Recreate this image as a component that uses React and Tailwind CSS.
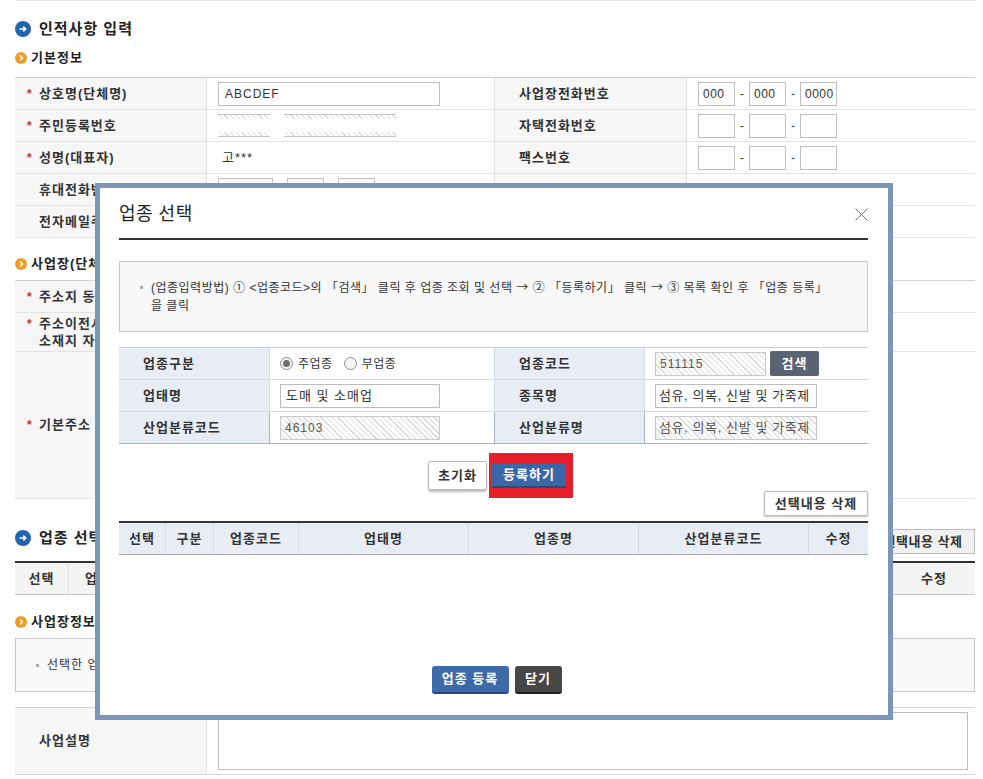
import React from 'react';

const hatch =
  'bg-[image:repeating-linear-gradient(45deg,#ffffff_0px,#ffffff_3px,#d9d9d9_3px,#d9d9d9_4px)]';

const BlueIcon = () => (
  <svg width="16" height="16" viewBox="0 0 16 16" className="shrink-0">
    <circle cx="8" cy="8" r="8" fill="#2165ad" />
    <path d="M4.6 8h6.2M8.3 5.6 10.8 8 8.3 10.4" stroke="#fff" strokeWidth="1.5" fill="none" />
  </svg>
);

const OrangeIcon = () => (
  <svg width="12" height="12" viewBox="0 0 12 12" className="shrink-0">
    <circle cx="6" cy="6" r="6" fill="#ee9d2a" />
    <path d="M5 3.6 7.4 6 5 8.4" stroke="#fff" strokeWidth="1.4" fill="none" />
  </svg>
);

const Star = () => <span className="w-[12px] shrink-0 text-[12px] text-[#c8312f]">*</span>;

const Arrow = () => <span className="font-['Noto_Sans_CJK_KR',sans-serif]">→</span>;

const Label = ({ star, children, h = 'h-[32px]' }) => (
  <div className={`${h} bg-[#f6f6f6] border-b border-r border-[#e3e3e3] flex items-center font-bold ${star ? 'pl-[12px]' : 'pl-[24px]'}`}>
    {star && <Star />}
    <span>{children}</span>
  </div>
);

const Cell = ({ children, h = 'h-[32px]', last }) => (
  <div className={`${h} border-b ${last ? '' : 'border-r'} border-[#e3e3e3] flex items-center pl-[11px]`}>{children}</div>
);

const Box = ({ w, children }) => (
  <div className={`${w} h-[24px] border border-[#bdbdbd] bg-white flex items-center px-[4px] text-[12px] tracking-[0.5px] overflow-hidden whitespace-nowrap`}>
    {children}
  </div>
);

const Dash = () => <span className="w-[14px] text-center text-[12px] tracking-normal">-</span>;

const Phone = ({ a = '', b = '', c = '' }) => (
  <div className="flex items-center">
    <Box w="w-[37px]">{a}</Box>
    <Dash />
    <Box w="w-[37px]">{b}</Box>
    <Dash />
    <Box w="w-[37px]">{c}</Box>
  </div>
);

// disabled masked field: hatched strips top and bottom
const Hatched = ({ w }) => (
  <div className={`${w} flex flex-col`}>
    <div className={`h-[5px] border-t border-[#c4c4c4] ${hatch}`} />
    <div className="h-[13px] bg-white" />
    <div className={`h-[5px] border-b border-[#c4c4c4] ${hatch}`} />
  </div>
);

const MLabel = ({ children }) => (
  <div className="h-[32px] bg-[#e8edf5] border-b border-r border-[#d6dce6] flex items-center pl-[24px] font-bold">{children}</div>
);

const MCell = ({ children, last }) => (
  <div className={`h-[32px] border-b ${last ? '' : 'border-r'} border-[#d6dce6] flex items-center pl-[10px]`}>{children}</div>
);

const Radio = ({ on, children }) => (
  <label className="flex items-center gap-[5px] text-[12px] tracking-[0.5px]">
    <span className="w-[13px] h-[13px] rounded-full border border-[#8d8d8d] bg-[#f5f5f5] flex items-center justify-center">
      {on && <span className="w-[7px] h-[7px] rounded-full bg-[#707070]" />}
    </span>
    {children}
  </label>
);

function Modal() {
  return (
    <div className="absolute left-[95px] top-[183px] w-[798px] h-[537px] border-[5px] border-[#7b96b9] bg-white pl-[19px] overflow-hidden">
      <div className="w-[749px]">
        <div className="h-[52px] pt-[3px] flex items-center justify-between border-b-2 border-[#333]">
          <span className="text-[18px] text-[#222] tracking-[0.5px]">업종 선택</span>
          <svg width="13" height="13" viewBox="0 0 13 13">
            <path d="M0.5 0.5 12.5 12.5M12.5 0.5 0.5 12.5" stroke="#777" strokeWidth="1" />
          </svg>
        </div>

        <div className="mt-[21px] h-[71px] border border-[#c9c9c9] bg-[#f7f7f7] flex items-center pl-[20px] text-[12px] leading-[18px] tracking-[0.5px]">
          <span className="self-start mt-[24px] w-[3px] h-[3px] bg-[#aaa] mr-[8px]" />
          <p>
            (업종입력방법) ① &lt;업종코드&gt;의 「검색」 클릭 후 업종 조회 및 선택 <Arrow /> ② 「등록하기」 클릭 <Arrow /> ③ 목록 확인 후 「업종 등록」
            <br />을 클릭
          </p>
        </div>

        <div className="mt-[15px] border-t border-[#d0d0d0] grid grid-cols-[151px_225px_150px_223px]">
          <MLabel>업종구분</MLabel>
          <MCell>
            <div className="flex items-center gap-[11px]">
              <Radio on>주업종</Radio>
              <Radio>부업종</Radio>
            </div>
          </MCell>
          <MLabel>업종코드</MLabel>
          <MCell last>
            <div className={`w-[111px] h-[24px] border border-[#c9c9c9] ${hatch} flex items-center px-[4px] text-[12px] text-[#555]`}>511115</div>
            <button className="ml-[4px] w-[49px] h-[25px] rounded-[2px] bg-[#5a6371] text-white font-bold text-[13px]">검색</button>
          </MCell>

          <MLabel>업태명</MLabel>
          <MCell>
            <div className="w-[160px] h-[24px] border border-[#bdbdbd] flex items-center px-[5px]">도매 및 소매업</div>
          </MCell>
          <MLabel>종목명</MLabel>
          <MCell last>
            <div className="w-[162px] h-[24px] border border-[#bdbdbd] flex items-center px-[3px] overflow-hidden whitespace-nowrap tracking-[0.6px]">섬유, 의복, 신발 및 가죽제</div>
          </MCell>

          <div className="h-[32px] bg-[#e8edf5] border-b border-r border-[#aeb4bd] flex items-center pl-[24px] font-bold">산업분류코드</div>
          <div className="h-[32px] border-b border-r border-[#aeb4bd] flex items-center pl-[10px]">
            <div className={`w-[160px] h-[24px] border border-[#c9c9c9] ${hatch} flex items-center px-[4px] text-[12px] text-[#555]`}>46103</div>
          </div>
          <div className="h-[32px] bg-[#e8edf5] border-b border-r border-[#aeb4bd] flex items-center pl-[24px] font-bold">산업분류명</div>
          <div className="h-[32px] border-b border-[#aeb4bd] flex items-center pl-[10px]">
            <div className={`w-[162px] h-[24px] border border-[#c9c9c9] ${hatch} flex items-center px-[3px] text-[#555] overflow-hidden whitespace-nowrap tracking-[0.6px]`}>섬유, 의복, 신발 및 가죽제</div>
          </div>
        </div>

        <div className="mt-[9px] flex justify-center items-center pl-[14px]">
          <button className="w-[59px] h-[29px] border border-[#bbb] bg-white rounded-[2px] shadow-[0_2px_2px_rgba(0,0,0,0.25)] font-bold">초기화</button>
          <div className="ml-[2px] bg-[#e5202a] pl-[3px] pr-[7px] py-[10px]">
            <button className="block w-[74px] h-[25px] bg-[#3c67a7] border-b-2 border-[#2a4a7d] text-white font-bold">등록하기</button>
          </div>
        </div>

        <div className="-mt-[7px] flex justify-end">
          <button className="w-[104px] h-[25px] border border-[#bbb] bg-white rounded-[2px] shadow-[0_1px_2px_rgba(0,0,0,0.25)] font-bold">선택내용 삭제</button>
        </div>

        <div className="mt-[5px] h-[34px] border-t-2 border-[#333] border-b border-b-[#a9a9a9] bg-[#e8edf5] grid grid-cols-[47px_48px_85px_170px_170px_170px_59px] font-bold">
          {['선택', '구분', '업종코드', '업태명', '업종명', '산업분류코드', '수정'].map((t, i) => (
            <div key={t} className={`flex items-center justify-center ${i < 6 ? 'border-r border-[#d3d9e3]' : ''}`}>{t}</div>
          ))}
        </div>

        <div className="mt-[111px] flex justify-center gap-[6px] pl-[6px]">
          <button className="w-[77px] h-[28px] rounded-[3px] bg-[#3d6aa9] border-b-2 border-[#264a80] text-white font-bold">업종 등록</button>
          <button className="w-[47px] h-[28px] rounded-[3px] bg-[#474747] border-b-2 border-[#222] text-white font-bold">닫기</button>
        </div>
      </div>
    </div>
  );
}

export default function App() {
  return (
    <div className="relative w-[983px] h-[779px] overflow-hidden bg-white text-[#333] text-[13px] tracking-[1px] font-['Liberation_Sans','Noto_Sans_CJK_KR',sans-serif]">
      <div className="pl-[15px] w-[975px]">
        <div className="h-px bg-[#e3e3e3]" />

        <div className="mt-[18px] h-[20px] flex items-center gap-[8px] text-[15px] font-bold text-[#222]">
          <BlueIcon />
          인적사항 입력
        </div>
        <div className="mt-[11px] h-[16px] flex items-center gap-[4px] font-bold text-[#222]">
          <OrangeIcon />
          기본정보
        </div>

        <div className="mt-[11px] border-t border-[#cfcfcf] grid grid-cols-[192px_288px_192px_288px]">
          <Label star>상호명(단체명)</Label>
          <Cell>
            <div className="w-[222px] h-[24px] border border-[#bdbdbd] flex items-center px-[6px] text-[12px]">ABCDEF</div>
          </Cell>
          <Label>사업장전화번호</Label>
          <Cell last>
            <Phone a="000" b="000" c="0000" />
          </Cell>

          <Label star>주민등록번호</Label>
          <Cell>
            <div className="flex items-center gap-[14px]">
              <Hatched w="w-[52px]" />
              <Hatched w="w-[112px]" />
            </div>
          </Cell>
          <Label>자택전화번호</Label>
          <Cell last>
            <Phone />
          </Cell>

          <Label star>성명(대표자)</Label>
          <Cell>
            <span className="pl-[4px]">고***</span>
          </Cell>
          <Label>팩스번호</Label>
          <Cell last>
            <Phone />
          </Cell>

          <Label>휴대전화번호</Label>
          <Cell>
            <div className="flex items-center">
              <Box w="w-[55px]" />
              <Dash />
              <Box w="w-[37px]" />
              <Dash />
              <Box w="w-[37px]" />
            </div>
          </Cell>
          <Label />
          <Cell last />

          <Label>전자메일주소</Label>
          <Cell />
          <Label />
          <Cell last />
        </div>

        <div className="mt-[18px] h-[16px] flex items-center gap-[4px] font-bold text-[#222]">
          <OrangeIcon />
          사업장(단체)정보
        </div>
        <div className="mt-[8px] border-t border-[#cfcfcf] grid grid-cols-[192px_768px]">
          <Label star>주소지 동일여부</Label>
          <Cell last />
          <div className="h-[39px] bg-[#f6f6f6] border-b border-r border-[#e3e3e3] flex items-center pl-[12px] font-bold leading-[17px]">
            <span className="self-start mt-[3px] w-[12px] shrink-0 text-[12px] text-[#c8312f]">*</span>
            <span>
              주소이전시 사업장
              <br />
              소재지 자동이전
            </span>
          </div>
          <Cell h="h-[39px]" last />
          <Label star h="h-[147px]">기본주소</Label>
          <Cell h="h-[147px]" last />
        </div>

        <div className="mt-[30px] h-[25px] flex items-start justify-between">
          <div className="h-[20px] -mt-px flex items-center gap-[8px] text-[15px] font-bold text-[#222]">
            <BlueIcon />
            업종 선택
          </div>
          <button className="w-[104px] h-[25px] border border-[#bbb] bg-[#f0f0f0] font-bold tracking-[0.5px]">선택내용 삭제</button>
        </div>
        <div className="mt-[7px] h-[34px] border-t-2 border-[#333] border-b border-b-[#c9c9c9] bg-[#f4f4f4] grid grid-cols-[54px_85px_200px_200px_200px_139px_82px] font-bold">
          {['선택', '업종코드', '업태명', '업종명', '산업분류코드', '구분', '수정'].map((t, i) => (
            <div key={t} className={`flex items-center justify-center ${i < 6 ? 'border-r border-[#e0e0e0]' : ''}`}>{t}</div>
          ))}
        </div>

        <div className="mt-[19px] h-[16px] flex items-center gap-[4px] font-bold text-[#222]">
          <OrangeIcon />
          사업장정보 입력
        </div>
        <div className="mt-[8px] h-[54px] border border-[#c9c9c9] bg-[#f9f9f9] flex items-center pl-[20px] text-[12px]">
          <span className="w-[3px] h-[3px] bg-[#aaa] mr-[8px]" />
          선택한 업종의 사업장 정보를 입력하세요.
        </div>

        <div className="mt-[15px] border-t border-b border-[#d6d6d6] grid grid-cols-[192px_768px]">
          <div className="h-[66px] bg-[#f6f6f6] border-r border-[#e3e3e3] flex items-center pl-[24px] font-bold">사업설명</div>
          <div className="h-[66px] flex items-center pl-[11px]">
            <div className="w-[750px] h-[58px] border border-[#bdbdbd]" />
          </div>
        </div>
      </div>

      <Modal />
    </div>
  );
}
